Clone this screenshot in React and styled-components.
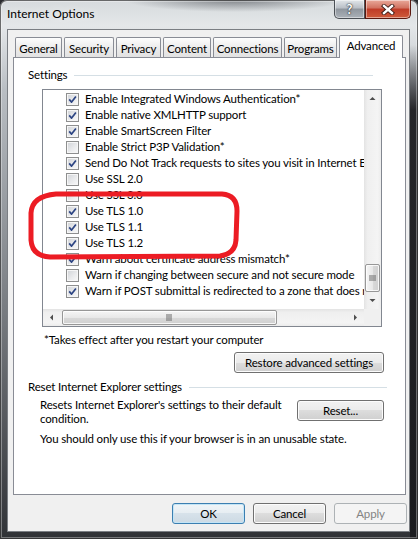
import React from 'react';
import styled, { createGlobalStyle, css } from 'styled-components';

const UI_FONT = `'Lato', 'Noto Sans', 'DejaVu Sans', sans-serif`;

const GlobalStyle = createGlobalStyle`
  html, body { margin: 0; padding: 0; background: #2b2c30; }
  body { font-family: ${UI_FONT}; font-size: 11.5px; letter-spacing: -0.15px; color: #000; }
  #root { width: 418px; height: 539px; }
`;

const settings = [
  ['Enable Integrated Windows Authentication*', true],
  ['Enable native XMLHTTP support', true],
  ['Enable SmartScreen Filter', true],
  ['Enable Strict P3P Validation*', false],
  ['Send Do Not Track requests to sites you visit in Internet Explorer', true],
  ['Use SSL 2.0', false],
  ['Use SSL 3.0', false],
  ['Use TLS 1.0', true],
  ['Use TLS 1.1', true],
  ['Use TLS 1.2', true],
  ['Warn about certificate address mismatch*', true],
  ['Warn if changing between secure and not secure mode', false],
  ['Warn if POST submittal is redirected to a zone that does not permit posts', true],
];

const tabs = [
  ['General', 47],
  ['Security', 50],
  ['Privacy', 45],
  ['Content', 48],
  ['Connections', 69],
  ['Programs', 53],
  ['Advanced', 64],
];

const Window = styled.div`
  position: relative;
  width: 418px;
  height: 539px;
  box-sizing: border-box;
  display: flex;
  flex-direction: column;
  padding: 0 8px 7px 7px;
  border-radius: 7px 7px 0 0;
  overflow: hidden;
  background:
    radial-gradient(ellipse 110px 12px at 235px 0px, rgba(70, 74, 80, 0.6), rgba(70, 74, 80, 0)),
    linear-gradient(to bottom, rgba(25, 25, 28, 0) 45px, rgba(25, 25, 28, 0.92) 110px) right top / 8px 100% no-repeat,
    linear-gradient(to bottom, #d6dadd 0, #e4e7e9 26px, #b9bec3 90px, #7b7f84 300px, #303236 100%);
  box-shadow: inset 0 0 0 1px rgba(0, 0, 0, 0.55), inset 0 0 0 2px rgba(255, 255, 255, 0.35);
`;

const TitleBar = styled.div`
  height: 29px;
  flex-shrink: 0;
  display: flex;
  align-items: flex-start;
`;

const Title = styled.div`
  padding-top: 6px;
  line-height: 16px;
  font-size: 12px;
  letter-spacing: 0;
  color: #000;
  text-shadow: 0 0 8px rgba(255, 255, 255, 0.9);
`;

const Caption = styled.div`
  margin-left: auto;
  margin-right: -1px;
  display: flex;
`;

const CaptionButton = styled.div`
  width: ${p => p.$w}px;
  height: 19px;
  box-sizing: border-box;
  display: flex;
  align-items: center;
  justify-content: center;
  border: 1px solid #4a4f55;
  border-top: none;
  border-radius: 0 0 0 5px;
  background: linear-gradient(#e2e6ea, #b9bfc6 45%, #8f969e 50%, #aab1b8 100%);
  box-shadow: inset 0 0 0 1px rgba(255, 255, 255, 0.45);
  color: #fff;
  font-weight: bold;
  font-size: 13px;
  text-shadow: 0 0 2px #222, 0 0 1px #222;
  ${p => p.$close && css`
    border-color: #5b1910;
    border-radius: 0 0 5px 0;
    background: linear-gradient(#e9a99a, #d1715f 45%, #bf3b27 50%, #cf5b3b 100%);
  `}
`;

const Client = styled.div`
  flex: 1;
  display: flex;
  flex-direction: column;
  box-sizing: border-box;
  background: #f0f0f0;
  border: 1px solid #7a7e83;
`;

const TabStrip = styled.div`
  height: 27px;
  flex-shrink: 0;
  display: flex;
  align-items: flex-end;
  gap: 2px;
  padding-left: 7px;
`;

const Tab = styled.div`
  width: ${p => p.$w}px;
  height: 20px;
  box-sizing: border-box;
  border: 1px solid #898c95;
  border-bottom: none;
  border-radius: 2px 2px 0 0;
  background: linear-gradient(#fdfdfd, #ececec 50%, #e2e2e2 100%);
  display: flex;
  align-items: center;
  justify-content: center;
  padding-top: 1px;
  white-space: nowrap;
  ${p => p.$active && css`
    position: relative;
    z-index: 1;
    height: 23px;
    margin-bottom: -1px;
    background: #fff;
    padding-top: 0;
    padding-bottom: 3px;
  `}
`;

const Panel = styled.div`
  height: 438px;
  box-sizing: border-box;
  margin: 0 3px 0 5px;
  padding: 9px 0 0 14px;
  background: #fff;
  border: 1px solid #898c95;
  display: flex;
  flex-direction: column;
  align-items: flex-start;
`;

const GroupHeader = styled.div`
  width: ${p => p.$w}px;
  margin-top: ${p => p.$top || 0}px;
  display: flex;
  align-items: center;
  line-height: 16px;
  white-space: nowrap;
  &::after {
    content: '';
    flex: 1;
    height: 1px;
    margin-left: 7px;
    background: #d5dfe5;
  }
`;

const ListBox = styled.div`
  margin: 6px 0 0 14px;
  width: 340px;
  height: 238px;
  box-sizing: border-box;
  border: 1px solid #828790;
  display: grid;
  grid-template-columns: 1fr 17px;
  grid-template-rows: 1fr 17px;
`;

const Viewport = styled.div`
  overflow: hidden;
  padding-top: 1px;
`;

const Row = styled.div`
  height: 16px;
  display: flex;
  align-items: center;
  padding-left: 23px;
  white-space: nowrap;
  line-height: 16px;
`;

const Box = styled.span`
  width: 13px;
  height: 13px;
  flex-shrink: 0;
  box-sizing: border-box;
  margin-right: 6px;
  border: 1px solid #8e8f8f;
  background: linear-gradient(135deg, #cfd2d6 0%, #e9eaec 55%, #fafafa 100%);
  box-shadow: inset 0 0 0 1px #f6f6f6;
  display: flex;
  align-items: center;
  justify-content: center;
`;

const ScrollBar = styled.div`
  display: flex;
  flex-direction: ${p => (p.$horizontal ? 'row' : 'column')};
  background: ${p => (p.$horizontal
    ? 'linear-gradient(#e3e3e3, #efefef 20%, #f4f4f4 80%, #ececec)'
    : 'linear-gradient(to right, #e3e3e3, #efefef 20%, #f4f4f4 80%, #ececec)')};
`;

const ArrowButton = styled.div`
  width: 17px;
  height: 17px;
  flex-shrink: 0;
  display: flex;
  align-items: center;
  justify-content: center;
`;

const Track = styled.div`
  flex: 1;
  display: flex;
  flex-direction: ${p => (p.$horizontal ? 'row' : 'column')};
  justify-content: ${p => (p.$end ? 'flex-end' : 'flex-start')};
  align-items: center;
`;

const Thumb = styled.div`
  box-sizing: border-box;
  width: ${p => (p.$horizontal ? `${p.$len}px` : '15px')};
  height: ${p => (p.$horizontal ? '15px' : `${p.$len}px`)};
  margin-left: ${p => (p.$horizontal ? '2px' : '0')};
  border: 1px solid #979797;
  border-radius: 2px;
  background: ${p => (p.$horizontal
    ? 'linear-gradient(#f6f6f6, #e8e8e8 50%, #d9d9d9 51%, #d0d0d0)'
    : 'linear-gradient(to right, #f6f6f6, #e8e8e8 50%, #d9d9d9 51%, #d0d0d0)')};
  box-shadow: inset 0 0 0 1px rgba(255, 255, 255, 0.8);
  display: flex;
  align-items: center;
  justify-content: center;
`;

const Corner = styled.div`
  background: #f0f0f0;
`;

const Note = styled.div`
  margin: ${p => p.$top}px 0 0 ${p => p.$left}px;
  line-height: 16px;
  white-space: nowrap;
`;

const Button = styled.button`
  width: ${p => p.$w}px;
  height: 21px;
  padding: 0;
  box-sizing: border-box;
  font-family: inherit;
  font-size: 11.5px;
  letter-spacing: -0.15px;
  color: #000;
  border: 1px solid #707070;
  border-radius: 3px;
  background: linear-gradient(#f2f2f2, #ebebeb 50%, #dddddd 50%, #cfcfcf);
  box-shadow: inset 0 0 0 1px #fcfcfc;
  flex-shrink: 0;
  ${p => p.$default && css`
    border-color: #3c7fb1;
    box-shadow: inset 0 0 0 1px #c4e5f6;
    background: linear-gradient(#f0f5f8, #e6edf2 50%, #d7e2ea 50%, #cddae4);
  `}
  &:disabled {
    color: #838383;
    border-color: #adb2b5;
    background: #f4f4f4;
    box-shadow: none;
  }
`;

const RestoreButton = styled(Button)`
  align-self: flex-end;
  margin: 4px 21px 0 0;
`;

const ResetRow = styled.div`
  width: 344px;
  margin: 3px 0 0 12px;
  display: flex;
  justify-content: space-between;
  align-items: flex-start;
`;

const Description = styled.div`
  width: 252px;
  line-height: 14px;
`;

const ResetButton = styled(Button)`
  margin-top: 2px;
`;

const Footer = styled.div`
  display: flex;
  justify-content: flex-end;
  gap: 8px;
  padding: 8px 2px 0 0;
`;

const Annotation = styled.svg`
  position: absolute;
  left: 0;
  top: 0;
  pointer-events: none;
`;

const Check = () => (
  <svg width="9" height="9" viewBox="0 0 9 9">
    <path d="M1.2 4.4 L3.6 7.1 L7.9 1.4" fill="none" stroke="#2d4583" strokeWidth="1.7" strokeLinejoin="round" />
  </svg>
);

const Arrow = ({ dir }) => {
  const pts = {
    up: '0.5,4 3.5,1 6.5,4',
    down: '0.5,1 3.5,4 6.5,1',
    left: '4,0.5 1,3.5 4,6.5',
    right: '1,0.5 4,3.5 1,6.5',
  }[dir];
  const vertical = dir === 'up' || dir === 'down';
  return (
    <svg width={vertical ? 7 : 5} height={vertical ? 5 : 7} viewBox={vertical ? '0 0 7 5' : '0 0 5 7'}>
      <polygon points={pts} fill="#4d4d4d" />
    </svg>
  );
};

const Grip = ({ horizontal }) => (
  <svg width="7" height="7" viewBox="0 0 7 7">
    {[0, 2, 4].map(o => (horizontal
      ? <rect key={o} x={o + 0.5} y="0" width="1" height="7" fill="#6b6b6b" />
      : <rect key={o} x="0" y={o + 0.5} width="7" height="1" fill="#6b6b6b" />))}
  </svg>
);

const CloseGlyph = () => (
  <svg width="14" height="11" viewBox="0 0 14 11">
    <path d="M3 2 L11 9 M11 2 L3 9" stroke="#3a1a14" strokeWidth="4.2" strokeLinecap="square" />
    <path d="M3 2 L11 9 M11 2 L3 9" stroke="#fff" strokeWidth="2.4" strokeLinecap="square" />
  </svg>
);

export default function App() {
  return (
    <>
      <GlobalStyle />
      <Window>
        <TitleBar>
          <Title>Internet Options</Title>
          <Caption>
            <CaptionButton $w={31}>?</CaptionButton>
            <CaptionButton $w={46} $close><CloseGlyph /></CaptionButton>
          </Caption>
        </TitleBar>

        <Client>
          <TabStrip>
            {tabs.map(([label, w]) => (
              <Tab key={label} $w={w} $active={label === 'Advanced'}>{label}</Tab>
            ))}
          </TabStrip>

          <Panel>
            <GroupHeader $w={345}>Settings</GroupHeader>
            <ListBox>
              <Viewport>
                {settings.map(([label, on]) => (
                  <Row key={label}>
                    <Box>{on && <Check />}</Box>
                    {label}
                  </Row>
                ))}
              </Viewport>
              <ScrollBar>
                <ArrowButton><Arrow dir="up" /></ArrowButton>
                <Track $end>
                  <Thumb $len={28}><Grip /></Thumb>
                </Track>
                <ArrowButton><Arrow dir="down" /></ArrowButton>
              </ScrollBar>
              <ScrollBar $horizontal>
                <ArrowButton><Arrow dir="left" /></ArrowButton>
                <Track $horizontal>
                  <Thumb $horizontal $len={215}><Grip horizontal /></Thumb>
                </Track>
                <ArrowButton><Arrow dir="right" /></ArrowButton>
              </ScrollBar>
              <Corner />
            </ListBox>

            <Note $top={5} $left={16}>*Takes effect after you restart your computer</Note>
            <RestoreButton $w={150}>Restore advanced settings</RestoreButton>

            <GroupHeader $w={359} $top={6}>Reset Internet Explorer settings</GroupHeader>
            <ResetRow>
              <Description>Resets Internet Explorer's settings to their default condition.</Description>
              <ResetButton $w={87}>Reset...</ResetButton>
            </ResetRow>
            <Note $top={5} $left={12}>You should only use this if your browser is in an unusable state.</Note>
          </Panel>

          <Footer>
            <Button $w={73} $default>OK</Button>
            <Button $w={73}>Cancel</Button>
            <Button $w={73} disabled>Apply</Button>
          </Footer>
        </Client>

        <Annotation width="418" height="539" viewBox="0 0 418 539">
          <path
            d="M56 194 L222 194 Q237 195 237 211 L236 240 Q235 254 220 256 L50 257 Q32 256 31 240 L31 213 Q32 196 56 194 Z"
            fill="none"
            stroke="#ec1c24"
            strokeWidth="5"
            strokeLinejoin="round"
          />
        </Annotation>
      </Window>
    </>
  );
}
